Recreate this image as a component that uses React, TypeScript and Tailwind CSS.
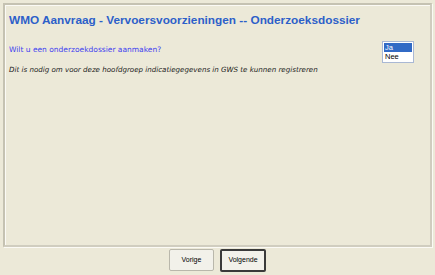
export default function App() {
  return (
    <div className="w-[435px] h-[275px] bg-[#ece9d8] flex flex-col pt-[3px] px-[3px] font-['DejaVu_Sans',sans-serif]">
      {/* Main panel */}
      <div className="h-[244px] border-2 border-[#d0cdbf] border-t-[#c5c2b2] border-l-[#c5c2b2] shadow-[inset_1px_1px_0_#fbfaf5,1px_1px_0_#fbfaf5] flex flex-col px-[4px] pt-[7px]">
        <h1 className="font-['Liberation_Sans',Arial,sans-serif] font-bold text-[11.8px] leading-[16px] text-[#2c5fc9]">
          WMO Aanvraag - Vervoersvoorzieningen -- Onderzoeksdossier
        </h1>

        <div className="flex justify-between mt-[17px]">
          <div className="flex flex-col">
            <p className="text-[7.5px] leading-[10px] text-[#3f3ff0]">Wilt u een onderzoekdossier aanmaken?</p>
            <p className="mt-[10px] text-[7.1px] leading-[10px] italic text-[#1a1a1a]">
              Dit is nodig om voor deze hoofdgroep indicatiegegevens in GWS te kunnen registreren
            </p>
          </div>
          <div className="mr-[12px] -mt-[4px] w-[32px] h-[22px] bg-white border border-[#a9b8d4] p-px flex flex-col text-[7.5px] leading-[9px] font-['Liberation_Sans',sans-serif]">
            <div className="bg-[#316ac5] text-white px-px">Ja</div>
            <div className="text-black px-px">Nee</div>
          </div>
        </div>
      </div>

      {/* Buttons */}
      <div className="flex justify-center gap-[6px] mt-[2px] font-['Liberation_Sans',sans-serif] text-[7px]">
        <button className="w-[45px] h-[22px] bg-[#f2f1ea] border border-[#b9b7ab] rounded-[2px] text-black">Vorige</button>
        <button className="w-[46px] h-[23px] bg-[#f2f1ea] border-2 border-[#3a3a3a] rounded-[2px] text-black">Volgende</button>
      </div>
    </div>
  );
}
